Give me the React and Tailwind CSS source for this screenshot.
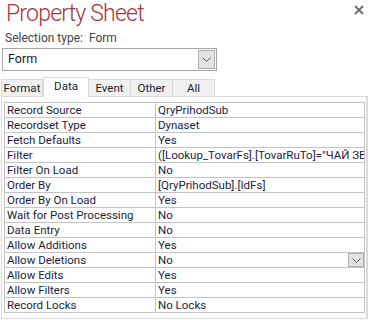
import React from "react";

const rows = [
  ["Record Source", "QryPrihodSub"],
  ["Recordset Type", "Dynaset"],
  ["Fetch Defaults", "Yes"],
  ["Filter", '([Lookup_TovarFs].[TovarRuTo]="ЧАЙ ЗЕЛЕНЫЙ")'],
  ["Filter On Load", "No"],
  ["Order By", "[QryPrihodSub].[IdFs]"],
  ["Order By On Load", "Yes"],
  ["Wait for Post Processing", "No"],
  ["Data Entry", "No"],
  ["Allow Additions", "Yes"],
  ["Allow Deletions", "No", true],
  ["Allow Edits", "Yes"],
  ["Allow Filters", "Yes"],
  ["Record Locks", "No Locks"],
];

function Chevron() {
  return (
    <svg width="9" height="5" viewBox="0 0 9 5" className="block">
      <path d="M0.5 0.5 L4.5 4.5 L8.5 0.5" fill="none" stroke="#5a5a5a" strokeWidth="1" />
    </svg>
  );
}

export default function App() {
  return (
    <div className="relative w-[371px] h-[320px] overflow-hidden bg-white font-[Roboto,sans-serif] text-[12px]">
      <div className="flex justify-between h-[30px]">
        <div className="pl-[6px] text-[23px] leading-[28px] font-light tracking-[-0.8px] text-[#a4373a]">Property Sheet</div>
        <svg width="10" height="10" viewBox="0 0 10 10" className="mt-[5px] mr-[7px]">
          <path d="M1 1 L9 9 M9 1 L1 9" stroke="#6b6b6b" strokeWidth="1.8" />
        </svg>
      </div>
      <div className="pl-[5px] h-[17px] leading-[16px] text-[#444] text-[12px]">Selection type:&nbsp; Form</div>
      <div className="ml-[2px] mt-[1px] w-[215px] h-[23px] border border-[#a6a6a6] flex items-center justify-between pl-[5px] pr-[1px] text-[12.5px] text-[#1c1c2c]">
        <span>Form</span>
        <div className="w-[17px] h-[19px] bg-[#e3e3e3] border border-[#adadad] flex items-center justify-center">
          <Chevron />
        </div>
      </div>
      <div className="flex items-end mt-[5px] ml-[1px] h-[20px] text-[11.5px] text-[#1c1c2c]">
        <div className="w-[42px] h-[17px] leading-[15px] bg-[#f0f0f0] border border-[#d9d9d9] border-b-0 flex items-center justify-center">Format</div>
        <div className="w-[46px] h-[20px] leading-[15px] bg-white border border-[#d9d9d9] border-b-0 flex items-start pt-[1px] justify-center -mb-[1px] relative z-10">Data</div>
        <div className="w-[42px] h-[17px] leading-[15px] bg-[#f0f0f0] border border-[#d9d9d9] border-b-0 border-l-0 flex items-center justify-center">Event</div>
        <div className="w-[42px] h-[17px] leading-[15px] bg-[#f0f0f0] border border-[#d9d9d9] border-b-0 border-l-0 flex items-center justify-center">Other</div>
        <div className="w-[42px] h-[17px] leading-[15px] bg-[#f0f0f0] border border-[#d9d9d9] border-b-0 border-l-0 flex items-center justify-center">All</div>
      </div>
      <div className="ml-[1px] w-[367px] h-[223px] border border-[#dadada] border-r-2 pt-[5px] pl-[2px]">
        <div className="w-[361px] border-t border-l border-[#c3c3c3]">
          {rows.map(([label, value, dd]) => (
            <div key={label} className="flex h-[15px] border-b border-[#c3c3c3] text-[#1c1c3c] text-[11.5px] leading-[14px]">
              <div className="w-[151px] shrink-0 border-r border-[#c3c3c3] pl-[2px] whitespace-nowrap overflow-hidden">{label}</div>
              <div className="flex-1 border-r border-[#c3c3c3] pl-[2px] whitespace-nowrap overflow-hidden relative">
                {value}
                {dd && (
                  <div className="absolute right-0 top-0 w-[16px] h-[14px] bg-[#e3e3e3] border border-[#adadad] flex items-center justify-center">
                    <Chevron />
                  </div>
                )}
              </div>
            </div>
          ))}
        </div>
      </div>
    </div>
  );
}
